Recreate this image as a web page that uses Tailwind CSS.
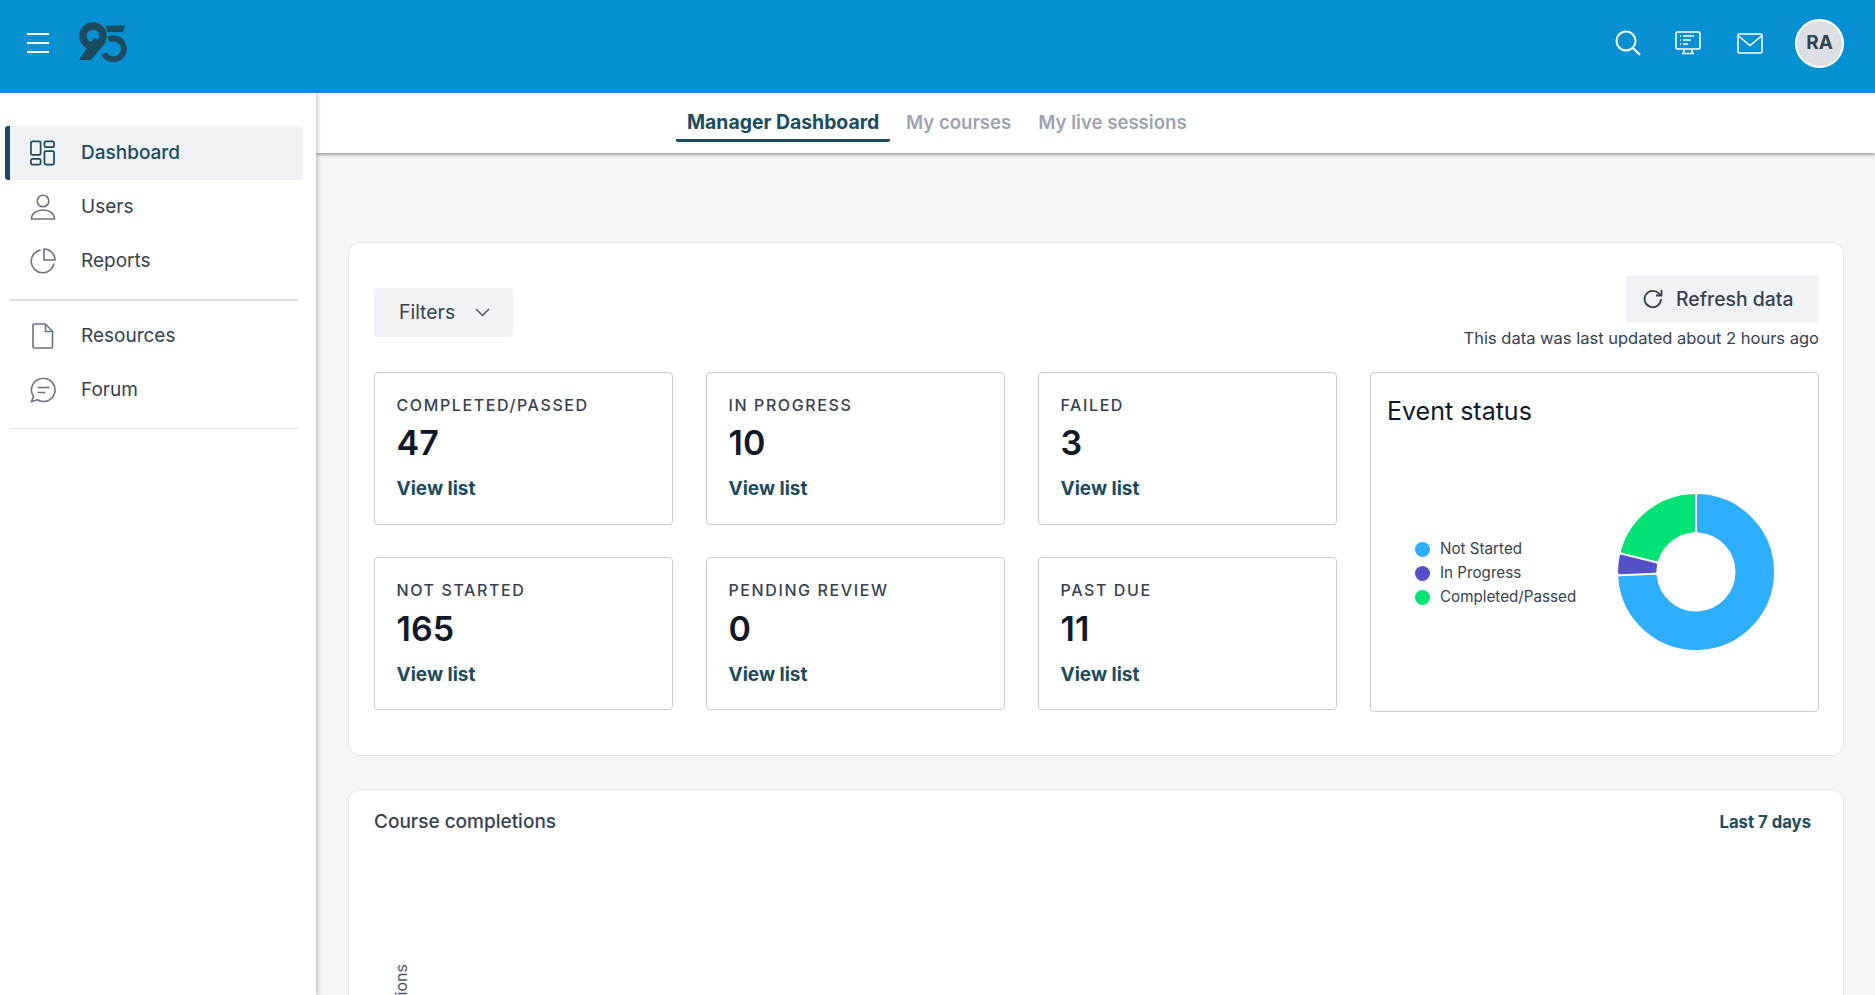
<!DOCTYPE html>
<html lang="en">
<head>
    <meta charset="UTF-8">
    <meta name="viewport" content="width=device-width, initial-scale=1.0">
    <title>Manager Dashboard</title>
    <script src="https://cdn.jsdelivr.net/npm/@tailwindcss/browser@4"></script>
</head>
<body class="h-screen overflow-hidden flex flex-col bg-[#f5f6f8] font-['Inter',sans-serif] text-[#374151]">

    <!-- Top bar -->
    <header class="h-[93px] shrink-0 bg-[#0790d1] flex items-center justify-between pl-[27px] pr-[31px] relative z-20">
        <div class="flex items-center gap-[30px] -mt-[7px]">
            <svg width="22" height="22" viewBox="0 0 22 22" fill="none" stroke="white" stroke-width="2"><path d="M0 2h22M0 11h22M0 20h22"/></svg>
            <svg width="48" height="42" viewBox="0 0 48 42" fill="none" stroke="#1b4b5f">
                <circle cx="14" cy="14" r="10" stroke-width="7.500"/>
                <path d="M0 38h12L27 20 15 16z" fill="#1b4b5f" stroke="none"/>
                <path d="M27 3.500h19L44 10H28z" fill="#1b4b5f" stroke="none"/>
                <path d="M29.500 17.500A10.500 10.500 0 1 1 25 31.500" stroke-width="6"/>
            </svg>
        </div>
        <div class="flex items-center -mt-[7px]">
            <svg class="mr-[34px]" width="26" height="26" viewBox="0 0 26 26" fill="none" stroke="white" stroke-width="2"><circle cx="11" cy="11" r="9.500"/><path d="M18 18l7 7"/></svg>
            <svg class="mr-[36px]" width="26" height="24" viewBox="0 0 26 24" fill="none" stroke="white" stroke-width="1.500"><rect x="1" y="1" width="24" height="17" rx="1.500"/><path d="M9.500 18l-1 4M16.500 18l1 4M7 22.500h12"/><path d="M8 5h11M8 9h8M8 13h5M5 5h1M5 9h1M5 13h1"/></svg>
            <svg class="mr-[32px]" width="26" height="21" viewBox="0 0 26 21" fill="none" stroke="white" stroke-width="1.500"><rect x="1" y="1" width="24" height="19" rx="1.500"/><path d="M1.500 3l11.500 9.500L24.500 3"/></svg>
            <div class="w-[49px] h-[49px] rounded-full bg-[#dcdfe4] border-2 border-white flex items-center justify-center text-[19px] font-bold text-[#374151]">RA</div>
        </div>
    </header>

    <div class="flex flex-1 min-h-0">
        <!-- Sidebar -->
        <aside class="w-[316px] shrink-0 bg-white shadow-[2px_0_4px_rgba(0,0,0,0.2)] relative z-10 pt-[33px] pl-[5px] text-[19px]">
            <a class="h-[54px] w-[298px] flex items-center bg-[#f0f1f5] rounded-[3px] border-l-[5px] border-[#1b4b5f] text-[#1b4b5f] font-medium">
                <span class="w-[25px] ml-[20px] mr-[26px] flex">
                    <svg width="26" height="26" viewBox="0 0 26 26" fill="none" stroke="#1b4b5f" stroke-width="1.800"><rect x="1" y="1" width="10" height="14" rx="1.500"/><rect x="15" y="1" width="10" height="6" rx="1.500"/><rect x="1" y="19" width="10" height="6" rx="1.500"/><rect x="15" y="11" width="10" height="14" rx="1.500"/></svg>
                </span>
                Dashboard
            </a>
            <a class="h-[54px] flex items-center pl-[25px]">
                <svg class="mr-[25px]" width="26" height="26" viewBox="0 0 26 26" fill="none" stroke="#6b7280" stroke-width="1.600"><circle cx="13" cy="7" r="5.800"/><path d="M1.500 25c0-5.500 5-9 11.500-9s11.500 3.500 11.500 9z"/></svg>
                Users
            </a>
            <a class="h-[54px] flex items-center pl-[25px]">
                <svg class="mr-[25px]" width="26" height="26" viewBox="0 0 26 26" fill="none" stroke="#6b7280" stroke-width="1.600"><path d="M10.500 2A11.500 11.500 0 1 0 24 15.500"/><path d="M14 1v11h11c0-6-5-11-11-11z"/></svg>
                Reports
            </a>
            <div class="ml-[5px] w-[288px] border-t-2 border-[#dde1e7] mt-[11px] mb-[8px]"></div>
            <a class="h-[54px] flex items-center pl-[25px]">
                <svg class="mr-[25px]" width="26" height="26" viewBox="0 0 26 26" fill="none" stroke="#6b7280" stroke-width="1.600"><path d="M4.500 1h11l7 7.500v15a1.500 1.500 0 0 1-1.500 1.500H4.500A1.500 1.500 0 0 1 3 23.500v-21A1.500 1.500 0 0 1 4.500 1z"/><path d="M15.500 1v7.500h7"/></svg>
                Resources
            </a>
            <a class="h-[54px] flex items-center pl-[25px]">
                <svg class="mr-[25px]" width="26" height="26" viewBox="0 0 26 26" fill="none" stroke="#6b7280" stroke-width="1.600"><path d="M13.500 1.500a11.500 11.500 0 1 1-6 21.300L1.500 24.500l2-5a11.500 11.500 0 0 1 10-18z"/><path d="M7.500 10.500h12M7.500 15.500h8"/></svg>
                Forum
            </a>
            <div class="ml-[5px] w-[288px] border-t border-[#dde1e7] mt-[11px]"></div>
        </aside>

        <div class="flex-1 min-w-0 flex flex-col">
            <!-- Tabs -->
            <nav class="h-[60px] shrink-0 bg-white shadow-[0_2px_3px_rgba(0,0,0,0.35)] flex pl-[360px] gap-[16px] text-[18.600px] font-semibold text-[#9ca3af]">
                <a class="w-[214px] pl-[11px] h-[49px] pt-[14px] flex items-center border-b-[3px] border-[#1b4b5f] rounded-b-[2px] text-[#1b4b5f] text-[19.400px] font-bold">Manager Dashboard</a>
                <a class="h-[49px] pt-[11px] flex items-center mr-[11px]">My courses</a>
                <a class="h-[49px] pt-[11px] flex items-center">My live sessions</a>
            </nav>

            <main class="flex-1 min-h-0 overflow-hidden pl-[32px] pr-[31px] pt-[89px]">
                <!-- Stats card -->
                <section class="h-[514px] bg-white border border-[#e3e5ea] rounded-[12px] pl-[25px] pr-[24px] pt-[32px]">
                    <div class="h-[97px] flex justify-between">
                        <button class="mt-[13px] w-[139px] h-[49px] rounded-[4px] bg-[#f1f2f6] flex items-center pl-[25px] text-[19.400px]">
                            Filters
                            <svg class="ml-[20px]" width="15" height="9" viewBox="0 0 15 9" fill="none" stroke="#4b5563" stroke-width="1.500"><path d="M1 1l6.500 6.500L14 1"/></svg>
                        </button>
                        <div class="flex flex-col items-end">
                            <button class="w-[193px] h-[48px] pt-[2px] rounded-[4px] bg-[#f1f2f6] flex items-center pl-[17px] text-[19.400px] font-medium">
                                <svg class="mr-[13px] -mt-[2px]" width="20" height="20" viewBox="0 0 20 20" fill="none" stroke="#374151" stroke-width="1.800"><path d="M18 10a8.200 8.200 0 1 1-2.400-5.800L18 6.500"/><path d="M18.500 1v5.500H13"/></svg>
                                Refresh data
                            </button>
                            <p class="mt-[3px] text-[16.500px] leading-[24px]">This data was last updated about 2 hours ago</p>
                        </div>
                    </div>
                    <div class="flex gap-[33px]">
                        <div class="grid grid-cols-3 w-[963px] gap-x-[33px] gap-y-[32px] shrink-0 self-start">
                            <div class="h-[153px] bg-white border border-[#c9ced6] rounded-[4px] pl-[21.500px] pt-[20px]">
                                <p class="text-[16px] leading-[24px] font-medium tracking-[0.1em]">COMPLETED/PASSED</p>
                                <p class="mt-[6px] text-[34px] leading-[40px] font-semibold text-[#111827]">47</p>
                                <a class="block mt-[12px] text-[19px] leading-[28px] font-bold text-[#1b4b5f]">View list</a>
                            </div>
                            <div class="h-[153px] bg-white border border-[#c9ced6] rounded-[4px] pl-[21.500px] pt-[20px]">
                                <p class="text-[16px] leading-[24px] font-medium tracking-[0.1em]">IN PROGRESS</p>
                                <p class="mt-[6px] text-[34px] leading-[40px] font-semibold text-[#111827]">10</p>
                                <a class="block mt-[12px] text-[19px] leading-[28px] font-bold text-[#1b4b5f]">View list</a>
                            </div>
                            <div class="h-[153px] bg-white border border-[#c9ced6] rounded-[4px] pl-[21.500px] pt-[20px]">
                                <p class="text-[16px] leading-[24px] font-medium tracking-[0.1em]">FAILED</p>
                                <p class="mt-[6px] text-[34px] leading-[40px] font-semibold text-[#111827]">3</p>
                                <a class="block mt-[12px] text-[19px] leading-[28px] font-bold text-[#1b4b5f]">View list</a>
                            </div>
                            <div class="h-[153px] bg-white border border-[#c9ced6] rounded-[4px] pl-[21.500px] pt-[20px]">
                                <p class="text-[16px] leading-[24px] font-medium tracking-[0.1em]">NOT STARTED</p>
                                <p class="mt-[7px] text-[34px] leading-[40px] font-semibold text-[#111827]">165</p>
                                <a class="block mt-[12px] text-[19px] leading-[28px] font-bold text-[#1b4b5f]">View list</a>
                            </div>
                            <div class="h-[153px] bg-white border border-[#c9ced6] rounded-[4px] pl-[21.500px] pt-[20px]">
                                <p class="text-[16px] leading-[24px] font-medium tracking-[0.1em]">PENDING REVIEW</p>
                                <p class="mt-[7px] text-[34px] leading-[40px] font-semibold text-[#111827]">0</p>
                                <a class="block mt-[12px] text-[19px] leading-[28px] font-bold text-[#1b4b5f]">View list</a>
                            </div>
                            <div class="h-[153px] bg-white border border-[#c9ced6] rounded-[4px] pl-[21.500px] pt-[20px]">
                                <p class="text-[16px] leading-[24px] font-medium tracking-[0.1em]">PAST DUE</p>
                                <p class="mt-[7px] text-[34px] leading-[40px] font-semibold text-[#111827]">11</p>
                                <a class="block mt-[12px] text-[19px] leading-[28px] font-bold text-[#1b4b5f]">View list</a>
                            </div>
                        </div>
                        <!-- Event status donut -->
                        <div class="flex-1 h-[340px] border border-[#c9ced6] rounded-[4px] pl-[16px] pt-[22px]">
                            <h3 class="text-[25px] leading-[32px] text-[#111827]">Event status</h3>
                            <div class="flex mt-[65px]">
                                <ul class="w-[229px] pl-[28px] pt-[45px] text-[15.200px] leading-[24px]">
                                    <li class="flex items-center"><span class="w-[15px] h-[15px] rounded-full bg-[#2eaeff] mr-[10px]"></span>Not Started</li>
                                    <li class="flex items-center"><span class="w-[15px] h-[15px] rounded-full bg-[#5650c8] mr-[10px]"></span>In Progress</li>
                                    <li class="flex items-center"><span class="w-[15px] h-[15px] rounded-full bg-[#03e274] mr-[10px]"></span>Completed/Passed</li>
                                </ul>
                                <svg width="160" height="160" viewBox="-80 -80 160 160" stroke-width="3" stroke-linejoin="round">
                                    <path fill="#2eaeff" stroke="#2eaeff" d="M2.500 -76.460A76.500 76.500 0 1 1 -76.290 5.700L-40.780 4.210A41 41 0 1 0 2.500 -40.920Z"/>
                                    <path fill="#5650c8" stroke="#5650c8" d="M-76.500 .71A76.500 76.500 0 0 1 -74.850 -15.810L-40.340 -7.340A41 41 0 0 0 -40.990 -.78Z"/>
                                    <path fill="#03e274" stroke="#03e274" d="M-73.650 -20.660A76.500 76.500 0 0 1 -2.500 -76.460L-2.500 -40.920A41 41 0 0 0 -39.150 -12.190Z"/>
                                </svg>
                            </div>
                        </div>
                    </div>
                </section>

                <!-- Course completions -->
                <section class="mt-[33px] h-[400px] bg-white border border-[#e3e5ea] rounded-[12px] pl-[25px] pr-[32px] pt-[16px]">
                    <div class="flex justify-between items-center h-[32px]">
                        <h3 class="text-[19px] font-medium">Course completions</h3>
                        <span class="pt-[2px] text-[16.700px] font-bold text-[#1b4b5f]">Last 7 days</span>
                    </div>
                    <p class="mt-[126px] ml-[15px] [writing-mode:vertical-rl] rotate-180 text-[16px] text-[#4b5563]">Completions</p>
                </section>
            </main>
        </div>
    </div>
</body>
</html>
